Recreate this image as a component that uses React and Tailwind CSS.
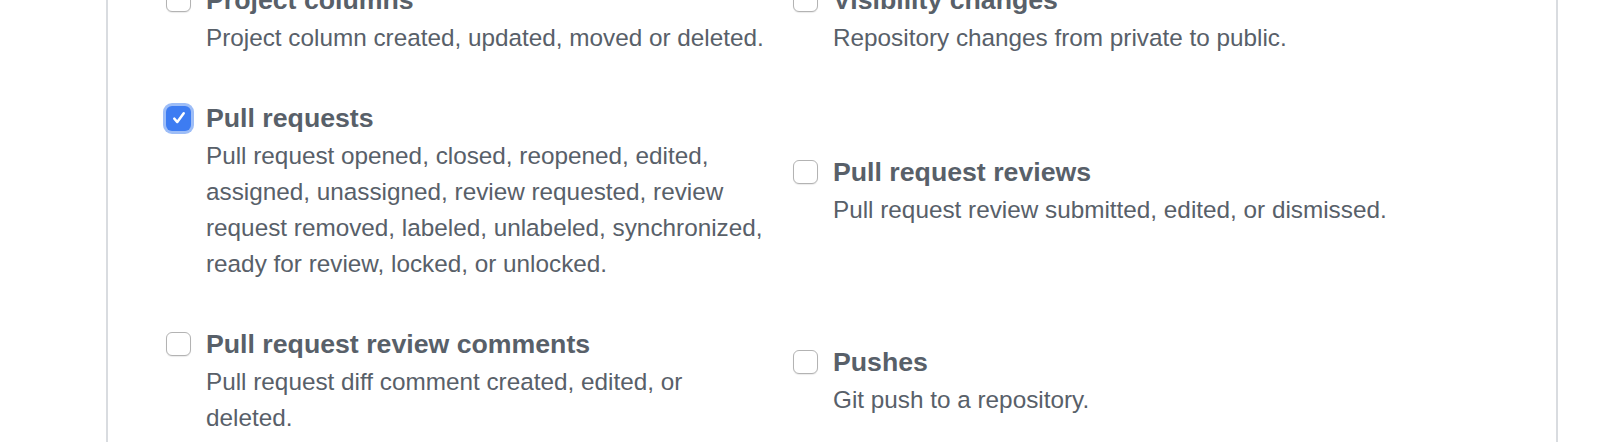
import React from 'react';

const rows = [
  [
    { title: 'Project columns', lines: ['Project column created, updated, moved or deleted.'] },
    { title: 'Visibility changes', lines: ['Repository changes from private to public.'] },
  ],
  [
    {
      title: 'Pull requests',
      checked: true,
      lines: [
        'Pull request opened, closed, reopened, edited,',
        'assigned, unassigned, review requested, review',
        'request removed, labeled, unlabeled, synchronized,',
        'ready for review, locked, or unlocked.',
      ],
    },
    { title: 'Pull request reviews', lines: ['Pull request review submitted, edited, or dismissed.'] },
  ],
  [
    {
      title: 'Pull request review comments',
      lines: ['Pull request diff comment created, edited, or', 'deleted.'],
    },
    { title: 'Pushes', lines: ['Git push to a repository.'] },
  ],
];

const Checkbox = ({ checked }) => {
  if (checked) {
    return (
      <span className="flex items-center justify-center w-[25px] h-[25px] rounded-[6px] bg-[#3d7cf2] ring-[3px] ring-[#9dbdf7]">
        <svg width="18" height="18" viewBox="0 0 16 16" fill="none">
          <path d="M3.8 8.6l2.7 3L12.2 3.8" stroke="white" strokeWidth="2.2" strokeLinecap="round" strokeLinejoin="round" />
        </svg>
      </span>
    );
  }
  return (
    <span className="block w-[25px] h-[24px] rounded-[6px] border border-[#b3b3b3] bg-white shadow-[0_1px_1px_rgba(0,0,0,0.08)]" />
  );
};

const EventChoice = ({ event }) => (
  <label className="flex gap-[15px]">
    <div className="h-[40px] flex items-center shrink-0">
      <Checkbox checked={event.checked} />
    </div>
    <div>
      <div className="text-[26.7px] leading-[40px] font-bold text-[#586069] whitespace-nowrap">{event.title}</div>
      <p className="text-[24.3px] leading-[36px] text-[#586069] whitespace-nowrap">
        {event.lines.map((line, i) => (
          <React.Fragment key={i}>
            {i > 0 && <br />}
            {line}
          </React.Fragment>
        ))}
      </p>
    </div>
  </label>
);

const App = () => {
  return (
    <div className="h-[442px] overflow-hidden bg-white font-['Liberation_Sans',Arial,sans-serif]">
      <div className="ml-[106px] w-[1452px] h-full flex flex-col border-x-2 border-[#d9dce0]">
        {/* Event choices */}
        <div className="-mt-[20px] pl-[58px] flex flex-col gap-[42px]">
          {rows.map((row, r) => (
            <div key={r} className="grid grid-cols-[627px_627px] items-center">
              {row.map((event) => (
                <EventChoice key={event.title} event={event} />
              ))}
            </div>
          ))}
        </div>
      </div>
    </div>
  );
};

export default App;
